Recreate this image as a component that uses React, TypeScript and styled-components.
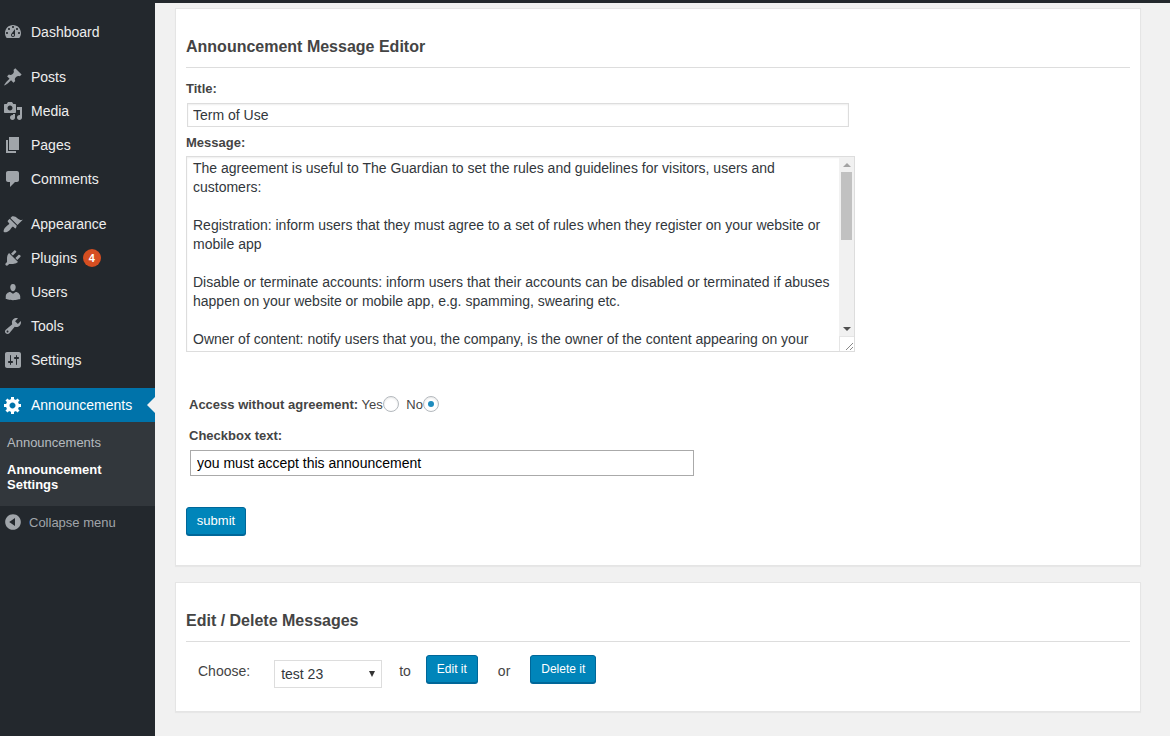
import React from "react";
import styled, { createGlobalStyle } from "styled-components";

const Global = createGlobalStyle`
  html, body { margin: 0; padding: 0; background: #f1f1f1; }
  body { font-family: "Liberation Sans", Arial, sans-serif; font-size: 13px; color: #444; overflow: hidden; }
  * { box-sizing: border-box; }
`;

const Page = styled.div`
  display: flex;
  width: 1170px;
  height: 736px;
  border-top: 3px solid #23282d;
  overflow: hidden;
`;
const Sidebar = styled.nav`
  width: 155px;
  flex: none;
  background: #23282d;
  padding-top: 12px;
`;
const MenuGroup = styled.div`
  margin-bottom: 11px;
`;
const MenuItem = styled.div<{ $active?: boolean }>`
  position: relative;
  display: flex;
  align-items: center;
  height: 34px;
  padding-left: 3px;
  font-size: 14px;
  color: ${(p) => (p.$active ? "#fff" : "#eee")};
  background: ${(p) => (p.$active ? "#0073aa" : "transparent")};
  svg { fill: ${(p) => (p.$active ? "#fff" : "#a0a5aa")}; }
  ${(p) =>
    p.$active
      ? `&::after {
    content: "";
    position: absolute;
    right: 0;
    top: 50%;
    margin-top: -8px;
    border: 8px solid transparent;
    border-right-color: #f1f1f1;
  }`
      : ""}
`;
const MenuIcon = styled.svg`
  width: 20px;
  height: 20px;
  flex: none;
  margin-right: 8px;
`;
const Badge = styled.span`
  display: inline-block;
  width: 18px;
  height: 18px;
  margin-left: 6px;
  border-radius: 50%;
  background: #d54e21;
  color: #fff;
  font-size: 11px;
  font-weight: 700;
  line-height: 18px;
  text-align: center;
`;
const SubMenu = styled.div`
  background: #32373c;
  padding: 13px 0 13px 7px;
  height: 84px;
`;
const SubItem = styled.div<{ $current?: boolean }>`
  font-size: 13px;
  line-height: 15px;
  color: ${(p) => (p.$current ? "#fff" : "rgba(240,245,250,0.7)")};
  font-weight: ${(p) => (p.$current ? 700 : 400)};
  margin-bottom: 12px;
  width: 130px;
`;
const Collapse = styled.div`
  display: flex;
  align-items: center;
  height: 32px;
  padding-left: 3px;
  font-size: 13px;
  color: #a0a5aa;
  svg { fill: #a0a5aa; margin-right: 6px; }
`;
const Main = styled.main`
  flex: 1;
  padding: 5px 29px 0 20px;
  min-width: 0;
`;
const Card = styled.section<{ $height: number }>`
  height: ${(p) => p.$height}px;
  background: #fff;
  border: 1px solid #e5e5e5;
  box-shadow: 0 1px 1px rgba(0, 0, 0, 0.04);
  padding: 0 10px;
  margin-bottom: 16px;
`;
const Heading = styled.h2`
  margin: 28px 0 0;
  height: 31px;
  font-size: 16px;
  line-height: 20px;
  font-weight: 700;
  color: #444;
  border-bottom: 1px solid #ddd;
`;
const FieldLabel = styled.label<{ $indent?: number; $top?: number }>`
  display: block;
  font-size: 13px;
  font-weight: 700;
  line-height: 16px;
  color: #444;
  margin-left: ${(p) => p.$indent ?? 0}px;
  margin-top: ${(p) => p.$top ?? 0}px;
`;
const TitleInput = styled.input`
  display: block;
  width: 662px;
  height: 24px;
  margin: 6px 0 8px 1px;
  padding: 0 5px;
  border: 1px solid #ddd;
  box-shadow: inset 0 1px 2px rgba(0, 0, 0, 0.07);
  background: #fff;
  color: #32373c;
  font: 14px/22px "Liberation Sans", Arial, sans-serif;
  outline: none;
`;
const MessageWrap = styled.div`
  position: relative;
  width: 669px;
  height: 196px;
  margin-top: 5px;
`;
const MessageArea = styled.textarea`
  display: block;
  width: 100%;
  height: 100%;
  padding: 2px 15px 2px 6px;
  border: 1px solid #ddd;
  box-shadow: inset 0 1px 2px rgba(0, 0, 0, 0.07);
  background: #fff;
  color: #32373c;
  font: 14px/19px "Liberation Sans", Arial, sans-serif;
  outline: none;
  resize: none;
  overflow: hidden;
`;
const FakeScrollbar = styled.div`
  position: absolute;
  top: 1px;
  right: 1px;
  bottom: 1px;
  width: 15px;
  display: flex;
  flex-direction: column;
  background: #f1f1f1;
`;
const ScrollArrow = styled.div<{ $down?: boolean }>`
  flex: none;
  height: 15px;
  display: flex;
  align-items: center;
  justify-content: center;
  &::before {
    content: "";
    border-left: 4px solid transparent;
    border-right: 4px solid transparent;
    ${(p) =>
      p.$down
        ? "border-top: 4px solid #505050;"
        : "border-bottom: 4px solid #a3a3a3;"}
  }
`;
const ScrollTrack = styled.div`
  flex: 1;
  padding: 0 2px;
`;
const ScrollThumb = styled.div`
  height: 68px;
  background: #c1c1c1;
`;
const ScrollCorner = styled.svg`
  flex: none;
  display: block;
  width: 15px;
  height: 15px;
  background: #fff;
  border-top: 1px solid #e5e5e5;
  border-left: 1px solid #e5e5e5;
`;
const AccessRow = styled.div`
  display: flex;
  align-items: center;
  height: 18px;
  margin: 43px 0 0 3px;
  font-size: 13px;
  color: #444;
`;
const AccessLabel = styled.span`
  font-weight: 700;
  margin-right: 3.5px;
`;
const ChoiceText = styled.span<{ $gap?: number }>`
  margin-left: ${(p) => p.$gap ?? 0}px;
`;
const Radio = styled.span<{ $on?: boolean }>`
  position: relative;
  display: inline-block;
  width: 16px;
  height: 16px;
  border: 1px solid #b4b9be;
  border-radius: 50%;
  background: #fff;
  box-shadow: inset 0 1px 2px rgba(0, 0, 0, 0.1);
  ${(p) =>
    p.$on
      ? `&::before {
    content: "";
    position: absolute;
    left: 4px;
    top: 4px;
    width: 6px;
    height: 6px;
    border-radius: 50%;
    background: #1e8cbe;
  }`
      : ""}
`;
const CheckboxInput = styled.input`
  display: block;
  width: 504px;
  height: 26px;
  margin: 6px 0 0 4px;
  padding: 0 6px;
  border: 1px solid #aaa;
  background: #fff;
  color: #000;
  font: 14px "Liberation Sans", Arial, sans-serif;
  outline: none;
`;
const Button = styled.button<{ $width: number; $height: number; $small?: boolean; $left?: number }>`
  display: block;
  flex: none;
  width: ${(p) => p.$width}px;
  height: ${(p) => p.$height}px;
  margin-left: ${(p) => p.$left ?? 0}px;
  padding: ${(p) => (p.$small ? "0" : "0 0 2px")};
  border: 1px solid #006799;
  border-radius: 3px;
  background: #0085ba;
  box-shadow: 0 1px 0 #006799;
  color: #fff;
  font: ${(p) => (p.$small ? "12px" : "13px")} "Liberation Sans", Arial, sans-serif;
`;
const SubmitWrap = styled.div`
  margin-top: 31px;
`;
const ChooseRow = styled.div`
  display: flex;
  align-items: flex-start;
  margin-top: 13px;
  font-size: 14px;
  color: #444;
`;
const RowText = styled.span<{ $left: number; $top?: number }>`
  margin-left: ${(p) => p.$left}px;
  margin-top: ${(p) => p.$top ?? 8}px;
  line-height: 16px;
`;
const Select = styled.div`
  position: relative;
  width: 108px;
  height: 28px;
  margin: 5px 0 0 24px;
  padding-left: 6px;
  border: 1px solid #ddd;
  background: #fff;
  color: #32373c;
  font-size: 14px;
  line-height: 26px;
  &::after {
    content: "";
    position: absolute;
    right: 6px;
    top: 10px;
    border: 3.5px solid transparent;
    border-top: 6px solid #333;
    border-bottom: 0;
  }
`;

const icons = {
  dashboard:
    "M3.76 16h12.48c1.1-1.37 1.76-3.11 1.76-5 0-4.42-3.58-8-8-8s-8 3.58-8 8c0 1.89.66 3.63 1.76 5zM10 4c.55 0 1 .45 1 1s-.45 1-1 1-1-.45-1-1 .45-1 1-1zM6 6c.55 0 1 .45 1 1s-.45 1-1 1-1-.45-1-1 .45-1 1-1zm8 0c.55 0 1 .45 1 1s-.45 1-1 1-1-.45-1-1 .45-1 1-1zm-5.37 5.55L12 7v6c0 1.1-.9 2-2 2s-2-.9-2-2c0-.57.24-1.08.63-1.45zM4 10c.55 0 1 .45 1 1s-.45 1-1 1-1-.45-1-1 .45-1 1-1zm12 0c.55 0 1 .45 1 1s-.45 1-1 1-1-.45-1-1 .45-1 1-1zm-5 3c0-.55-.45-1-1-1s-1 .45-1 1 .45 1 1 1 1-.45 1-1z",
  posts:
    "M10.44 3.02l1.82-1.82 6.36 6.35-1.83 1.82c-1.05-.68-2.48-.57-3.41.36l-.75.75c-.92.93-1.04 2.35-.35 3.41l-1.83 1.82-2.41-2.41-2.8 2.79c-.42.42-3.38 2.71-3.8 2.29s1.86-3.39 2.28-3.81l2.79-2.79L4.1 9.36l1.83-1.82c1.05.69 2.48.57 3.4-.36l.75-.75c.93-.92 1.05-2.35.36-3.41z",
  media:
    "M13 11V4c0-.55-.45-1-1-1h-1.67L9 1H5L3.67 3H2c-.55 0-1 .45-1 1v7c0 .55.45 1 1 1h10c.55 0 1-.45 1-1zM7 4.5c1.38 0 2.5 1.12 2.5 2.5S8.38 9.5 7 9.5 4.5 8.38 4.5 7 5.62 4.5 7 4.5zM14 6h5v10.5c0 1.38-1.12 2.5-2.5 2.5S14 17.88 14 16.5s1.12-2.5 2.5-2.5c.17 0 .34.02.5.05V9h-3V6zm-4 8.05V13h2v3.5c0 1.38-1.12 2.5-2.5 2.5S7 17.88 7 16.5 8.12 14 9.5 14c.17 0 .34.02.5.05z",
  pages: "M6 15V2h10v13H6zm-1 1h8v2H3V5h2v11z",
  comments:
    "M5 2h9c1.1 0 2 .9 2 2v7c0 1.1-.9 2-2 2h-2l-5 5v-5H5c-1.1 0-2-.9-2-2V4c0-1.1.9-2 2-2z",
  appearance:
    "M14.48 11.06L7.41 3.99l1.5-1.5c.5-.56 2.3-.47 3.51.32 1.21.8 1.43 1.28 2.91 2.1 1.18.64 2.45 1.26 4.45.85zm-.71.71L6.7 4.7 4.93 6.47c-.39.39-.39 1.02 0 1.41l1.06 1.06c.39.39.39 1.03 0 1.42-.6.6-1.43 1.11-2.21 1.69-.35.26-.7.53-1.01.84C1.43 13.71 0 17 1.01 18c1.01 1 4.29-.42 5.59-1.72.31-.31.58-.66.84-1.01.58-.78 1.09-1.61 1.69-2.21.39-.39 1.03-.39 1.42 0l1.06 1.06c.39.39 1.02.39 1.41 0z",
  plugins:
    "M13.11 4.36L9.87 7.6 8 5.73l3.24-3.24c.35-.34 1.05-.2 1.56.32.52.51.66 1.21.31 1.55zm-8 1.77l.91-1.12 9.01 9.01-1.19.84c-.71.71-2.63 1.16-3.82 1.16H6.14L4.9 17.26c-.59.59-1.54.59-2.12 0-.59-.58-.59-1.53 0-2.12l1.24-1.24v-3.88c0-1.13.4-3.19 1.09-3.89zm7.26 3.97l3.24-3.24c.34-.35 1.04-.21 1.55.31.52.51.66 1.21.31 1.55l-3.24 3.25z",
  users:
    "M10 9.25c-2.27 0-2.73-3.44-2.73-3.44C7 4.02 7.82 2 9.97 2c2.16 0 2.98 2.02 2.71 3.81 0 0-.41 3.44-2.68 3.44zm0 2.57L12.72 10c2.39 0 4.52 2.33 4.52 4.53v2.49s-3.65 1.13-7.24 1.13c-3.65 0-7.24-1.13-7.24-1.13v-2.49c0-2.25 1.94-4.48 4.47-4.48z",
  tools:
    "M16.68 9.77c-1.34 1.34-3.3 1.67-4.95.99l-5.41 6.52c-.99.99-2.59.99-3.58 0s-.99-2.59 0-3.57l6.52-5.42c-.68-1.65-.35-3.61.99-4.95 1.28-1.28 3.12-1.62 4.72-1.06l-2.89 2.89 2.82 2.82 2.86-2.87c.53 1.58.18 3.39-1.08 4.65zM3.81 16.21c.4.39 1.04.39 1.43 0 .4-.4.4-1.04 0-1.43-.39-.4-1.03-.4-1.43 0-.39.39-.39 1.03 0 1.43z",
  settings:
    "M18 16V4c0-1.1-.9-2-2-2H4c-1.1 0-2 .9-2 2v12c0 1.1.9 2 2 2h12c1.1 0 2-.9 2-2zM8 11h1c.55 0 1 .45 1 1s-.45 1-1 1H8v1.5c0 .28-.22.5-.5.5s-.5-.22-.5-.5V13H6c-.55 0-1-.45-1-1s.45-1 1-1h1V5.5c0-.28.22-.5.5-.5s.5.22.5.5V11zm5-2h-1c-.55 0-1-.45-1-1s.45-1 1-1h1V5.5c0-.28.22-.5.5-.5s.5.22.5.5V7h1c.55 0 1 .45 1 1s-.45 1-1 1h-1v5.5c0 .28-.22.5-.5.5s-.5-.22-.5-.5V9z",
  gear:
    "M18 12h-2.18c-.17.7-.44 1.35-.81 1.93l1.54 1.54-2.1 2.1-1.54-1.54c-.58.36-1.23.63-1.91.79V19H8v-2.18c-.68-.16-1.33-.43-1.91-.79l-1.54 1.54-2.12-2.12 1.54-1.54c-.36-.58-.63-1.23-.79-1.91H1V9.03h2.17c.16-.7.44-1.35.8-1.94L2.43 5.55l2.1-2.1 1.54 1.54c.58-.37 1.24-.64 1.93-.81V2h3v2.18c.68.16 1.33.43 1.91.79l1.54-1.54 2.12 2.12-1.54 1.54c.36.59.64 1.24.8 1.94H18V12zm-8.5 1.5c1.66 0 3-1.34 3-3s-1.34-3-3-3-3 1.34-3 3 1.34 3 3 3z",
  collapse:
    "M10 2.16c4.33 0 7.84 3.51 7.84 7.84s-3.51 7.84-7.84 7.84S2.16 14.33 2.16 10 5.71 2.16 10 2.16zm2 11.72V6.12L6.18 9.97z",
};

const Icon = ({ name }: { name: keyof typeof icons }) => (
  <MenuIcon viewBox="0 0 20 20" aria-hidden="true">
    <path d={icons[name]} />
  </MenuIcon>
);

const message = `The agreement is useful to The Guardian to set the rules and guidelines for visitors, users and customers:

Registration: inform users that they must agree to a set of rules when they register on your website or mobile app

Disable or terminate accounts: inform users that their accounts can be disabled or terminated if abuses happen on your website or mobile app, e.g. spamming, swearing etc.

Owner of content: notify users that you, the company, is the owner of the content appearing on your`;

export default function App() {
  return (
    <>
      <Global />
      <Page>
        <Sidebar>
          <MenuGroup>
            <MenuItem><Icon name="dashboard" />Dashboard</MenuItem>
          </MenuGroup>
          <MenuGroup>
            <MenuItem><Icon name="posts" />Posts</MenuItem>
            <MenuItem><Icon name="media" />Media</MenuItem>
            <MenuItem><Icon name="pages" />Pages</MenuItem>
            <MenuItem><Icon name="comments" />Comments</MenuItem>
          </MenuGroup>
          <MenuGroup>
            <MenuItem><Icon name="appearance" />Appearance</MenuItem>
            <MenuItem><Icon name="plugins" />Plugins<Badge>4</Badge></MenuItem>
            <MenuItem><Icon name="users" />Users</MenuItem>
            <MenuItem><Icon name="tools" />Tools</MenuItem>
            <MenuItem><Icon name="settings" />Settings</MenuItem>
          </MenuGroup>
          <MenuItem $active><Icon name="gear" />Announcements</MenuItem>
          <SubMenu>
            <SubItem>Announcements</SubItem>
            <SubItem $current>Announcement Settings</SubItem>
          </SubMenu>
          <Collapse><Icon name="collapse" />Collapse menu</Collapse>
        </Sidebar>
        <Main>
          <Card $height={558}>
            <Heading>Announcement Message Editor</Heading>
            <FieldLabel $top={13}>Title:</FieldLabel>
            <TitleInput defaultValue="Term of Use" />
            <FieldLabel>Message:</FieldLabel>
            <MessageWrap>
              <MessageArea defaultValue={message} />
              <FakeScrollbar aria-hidden="true">
                <ScrollArrow />
                <ScrollTrack><ScrollThumb /></ScrollTrack>
                <ScrollArrow $down />
                <ScrollCorner viewBox="0 0 14 14">
                  <path d="M6 13L13 6M10 13L13 10" stroke="#888" strokeWidth="1" fill="none" />
                </ScrollCorner>
              </FakeScrollbar>
            </MessageWrap>
            <AccessRow>
              <AccessLabel>Access without agreement:</AccessLabel>
              <ChoiceText>Yes</ChoiceText>
              <Radio />
              <ChoiceText $gap={7.5}>No</ChoiceText>
              <Radio $on />
            </AccessRow>
            <FieldLabel $indent={3} $top={15}>Checkbox text:</FieldLabel>
            <CheckboxInput defaultValue="you must accept this announcement" />
            <SubmitWrap>
              <Button $width={60} $height={28}>submit</Button>
            </SubmitWrap>
          </Card>
          <Card $height={130}>
            <Heading>Edit / Delete Messages</Heading>
            <ChooseRow>
              <RowText $left={12} $top={8}>Choose:</RowText>
              <Select>test 23</Select>
              <RowText $left={17} $top={8}>to</RowText>
              <Button $width={52} $height={28} $small $left={15}>Edit it</Button>
              <RowText $left={20} $top={8}>or</RowText>
              <Button $width={66} $height={28} $small $left={20}>Delete it</Button>
            </ChooseRow>
          </Card>
        </Main>
      </Page>
    </>
  );
}
